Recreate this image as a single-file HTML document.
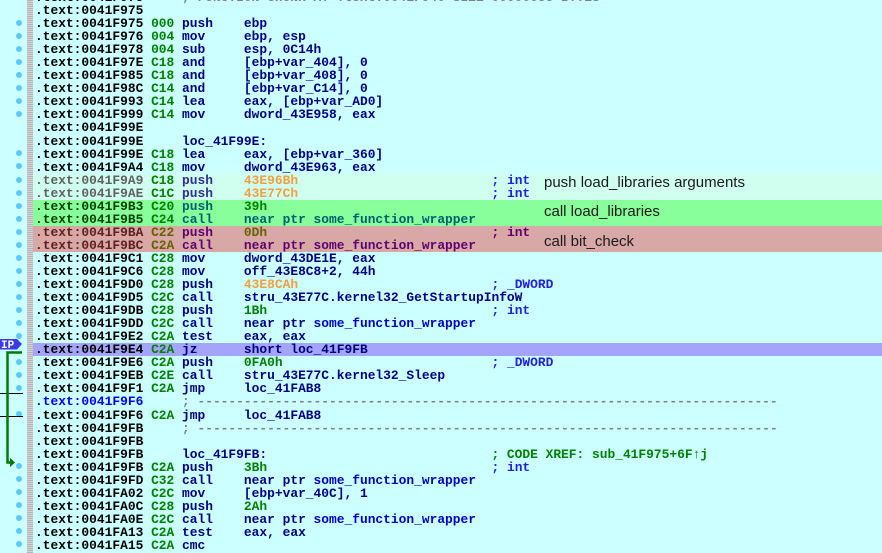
<!DOCTYPE html>
<html><head><meta charset="utf-8"><style>
html,body{margin:0;padding:0;width:882px;height:553px;overflow:hidden;background:#ccffff;}
#g{position:absolute;left:0;top:0;width:27px;height:553px;background:#ccffff;}
#s{position:absolute;left:27px;top:0;width:6px;height:553px;background:repeating-linear-gradient(0deg,#b4b4b4 0 1px,#d4d4d4 1px 2px);}
#code{position:absolute;left:33px;top:-9px;width:849px;font-family:"Liberation Mono",monospace;font-size:12.9px;font-weight:bold;}
.l{height:13.05px;line-height:13.05px;white-space:pre;padding-left:2px;position:relative;color:#000;}
.a{color:#000}.k{color:#008000}.m{color:#000080}.o{color:#000080}.c{color:#2020e0}.n{color:#008000}.f{color:#0000c0}.x{color:#008000}.gr{color:#808080}
.lt{background:#d0fff0}.lt .a{color:#606060}.lt .m{color:#303090}.or{color:#f0a040}
.gn{background:#88ff9a}.gn .a{color:#004000}.gn .m,.gn .o,.gn .f{color:#006070}
.rd{background:#d8a8a6}.rd .a{color:#602020}.rd .k{color:#6a6000}.rd .m,.rd .o,.rd .f,.rd .c{color:#600070}.rd .n{color:#6a6000}
.bl{background:#a4a4fa}
.ann{position:absolute;left:544px;font-family:"Liberation Sans",sans-serif;font-size:15px;color:#1a1a1a;}
.blu{color:#0000ff}
</style></head><body>
<div id="g"></div><div id="s"></div>
<div id="code">
<div class="l"><span class="a">.text:0041F975</span>     <span class="gr">; FUNCTION CHUNK AT .text:0041F940 SIZE 00000035 BYTES</span></div>
<div class="l"><span class="a">.text:0041F975</span></div>
<div class="l"><span class="a">.text:0041F975</span> <span class="k">000</span> <span class="m">push    </span><span class="o">ebp</span></div>
<div class="l"><span class="a">.text:0041F976</span> <span class="k">004</span> <span class="m">mov     </span><span class="o">ebp, esp</span></div>
<div class="l"><span class="a">.text:0041F978</span> <span class="k">004</span> <span class="m">sub     </span><span class="o">esp, 0C14h</span></div>
<div class="l"><span class="a">.text:0041F97E</span> <span class="k">C18</span> <span class="m">and     </span><span class="o">[ebp+var_404], 0</span></div>
<div class="l"><span class="a">.text:0041F985</span> <span class="k">C18</span> <span class="m">and     </span><span class="o">[ebp+var_408], 0</span></div>
<div class="l"><span class="a">.text:0041F98C</span> <span class="k">C14</span> <span class="m">and     </span><span class="o">[ebp+var_C14], 0</span></div>
<div class="l"><span class="a">.text:0041F993</span> <span class="k">C14</span> <span class="m">lea     </span><span class="o">eax, [ebp+var_AD0]</span></div>
<div class="l"><span class="a">.text:0041F999</span> <span class="k">C14</span> <span class="m">mov     </span><span class="o">dword_43E958, eax</span></div>
<div class="l"><span class="a">.text:0041F99E</span></div>
<div class="l"><span class="a">.text:0041F99E</span>     <span class="m">loc_41F99E:</span></div>
<div class="l"><span class="a">.text:0041F99E</span> <span class="k">C18</span> <span class="m">lea     </span><span class="o">eax, [ebp+var_360]</span></div>
<div class="l"><span class="a">.text:0041F9A4</span> <span class="k">C18</span> <span class="m">mov     </span><span class="o">dword_43E963, eax</span></div>
<div class="l lt"><span class="a">.text:0041F9A9</span> <span class="k">C18</span> <span class="m">push    </span><span class="or">43E96Bh</span>                         <span class="c">; int</span></div>
<div class="l lt"><span class="a">.text:0041F9AE</span> <span class="k">C1C</span> <span class="m">push    </span><span class="or">43E77Ch</span>                         <span class="c">; int</span></div>
<div class="l gn"><span class="a">.text:0041F9B3</span> <span class="k">C20</span> <span class="m">push    </span><span class="n">39h</span></div>
<div class="l gn"><span class="a">.text:0041F9B5</span> <span class="k">C24</span> <span class="m">call    </span><span class="o">near ptr <span class="f">some_function_wrapper</span></span></div>
<div class="l rd"><span class="a">.text:0041F9BA</span> <span class="k">C22</span> <span class="m">push    </span><span class="n">0Dh</span>                             <span class="c">; int</span></div>
<div class="l rd"><span class="a">.text:0041F9BC</span> <span class="k">C2A</span> <span class="m">call    </span><span class="o">near ptr <span class="f">some_function_wrapper</span></span></div>
<div class="l"><span class="a">.text:0041F9C1</span> <span class="k">C28</span> <span class="m">mov     </span><span class="o">dword_43DE1E, eax</span></div>
<div class="l"><span class="a">.text:0041F9C6</span> <span class="k">C28</span> <span class="m">mov     </span><span class="o">off_43E8C8+2, 44h</span></div>
<div class="l"><span class="a">.text:0041F9D0</span> <span class="k">C28</span> <span class="m">push    </span><span class="or">43E8CAh</span>                         <span class="c">; _DWORD</span></div>
<div class="l"><span class="a">.text:0041F9D5</span> <span class="k">C2C</span> <span class="m">call    </span><span class="o">stru_43E77C.kernel32_GetStartupInfoW</span></div>
<div class="l"><span class="a">.text:0041F9DB</span> <span class="k">C28</span> <span class="m">push    </span><span class="n">1Bh</span>                             <span class="c">; int</span></div>
<div class="l"><span class="a">.text:0041F9DD</span> <span class="k">C2C</span> <span class="m">call    </span><span class="o">near ptr <span class="f">some_function_wrapper</span></span></div>
<div class="l"><span class="a">.text:0041F9E2</span> <span class="k">C2A</span> <span class="m">test    </span><span class="o">eax, eax</span></div>
<div class="l bl"><span class="a">.text:0041F9E4</span> <span class="k">C2A</span> <span class="m">jz      </span><span class="o">short loc_41F9FB</span></div>
<div class="l"><span class="a">.text:0041F9E6</span> <span class="k">C2A</span> <span class="m">push    </span><span class="n">0FA0h</span>                           <span class="c">; _DWORD</span></div>
<div class="l"><span class="a">.text:0041F9EB</span> <span class="k">C2E</span> <span class="m">call    </span><span class="o">stru_43E77C.kernel32_Sleep</span></div>
<div class="l"><span class="a">.text:0041F9F1</span> <span class="k">C2A</span> <span class="m">jmp     </span><span class="o">loc_41FAB8</span></div>
<div class="l"><span class="blu">.text:0041F9F6</span>     <span class="gr">; ---------------------------------------------------------------------------</span></div>
<div class="l"><span class="a">.text:0041F9F6</span> <span class="k">C2A</span> <span class="m">jmp     </span><span class="o">loc_41FAB8</span></div>
<div class="l"><span class="a">.text:0041F9FB</span>     <span class="gr">; ---------------------------------------------------------------------------</span></div>
<div class="l"><span class="a">.text:0041F9FB</span></div>
<div class="l"><span class="a">.text:0041F9FB</span>     <span class="m">loc_41F9FB:</span>                             <span class="x">; CODE XREF: sub_41F975+6F↑j</span></div>
<div class="l"><span class="a">.text:0041F9FB</span> <span class="k">C2A</span> <span class="m">push    </span><span class="n">3Bh</span>                             <span class="c">; int</span></div>
<div class="l"><span class="a">.text:0041F9FD</span> <span class="k">C32</span> <span class="m">call    </span><span class="o">near ptr <span class="f">some_function_wrapper</span></span></div>
<div class="l"><span class="a">.text:0041FA02</span> <span class="k">C2C</span> <span class="m">mov     </span><span class="o">[ebp+var_40C], 1</span></div>
<div class="l"><span class="a">.text:0041FA0C</span> <span class="k">C28</span> <span class="m">push    </span><span class="n">2Ah</span></div>
<div class="l"><span class="a">.text:0041FA0E</span> <span class="k">C2C</span> <span class="m">call    </span><span class="o">near ptr <span class="f">some_function_wrapper</span></span></div>
<div class="l"><span class="a">.text:0041FA13</span> <span class="k">C2A</span> <span class="m">test    </span><span class="o">eax, eax</span></div>
<div class="l"><span class="a">.text:0041FA15</span> <span class="k">C2A</span> <span class="m">cmc</span></div>
</div>
<div class="ann" style="top:174px">push load_libraries arguments</div>
<div class="ann" style="top:203px">call load_libraries</div>
<div class="ann" style="top:233px">call bit_check</div>
<svg width="33" height="553" style="position:absolute;left:0;top:0">
<g fill="#5cc8ff">
<circle cx="19" cy="23" r="3"/><circle cx="19" cy="36" r="3"/><circle cx="19" cy="49" r="3"/><circle cx="19" cy="62" r="3"/><circle cx="19" cy="75" r="3"/><circle cx="19" cy="88" r="3"/><circle cx="19" cy="101" r="3"/><circle cx="19" cy="114" r="3"/>
<circle cx="19" cy="153" r="3"/><circle cx="19" cy="166" r="3"/><circle cx="19" cy="180" r="3"/><circle cx="19" cy="193" r="3"/><circle cx="19" cy="206" r="3"/><circle cx="19" cy="219" r="3"/><circle cx="19" cy="232" r="3"/><circle cx="19" cy="245" r="3"/><circle cx="19" cy="258" r="3"/><circle cx="19" cy="271" r="3"/><circle cx="19" cy="284" r="3"/><circle cx="19" cy="297" r="3"/><circle cx="19" cy="310" r="3"/><circle cx="19" cy="323" r="3"/><circle cx="19" cy="336" r="3"/>
<circle cx="19" cy="362" r="3"/><circle cx="19" cy="375" r="3"/><circle cx="19" cy="388" r="3"/><circle cx="19" cy="414" r="3"/>
<circle cx="19" cy="466" r="3"/><circle cx="19" cy="479" r="3"/><circle cx="19" cy="492" r="3"/><circle cx="19" cy="505" r="3"/><circle cx="19" cy="518" r="3"/><circle cx="19" cy="531" r="3"/><circle cx="19" cy="544" r="3"/>
</g>
<line x1="0" y1="393.5" x2="23" y2="393.5" stroke="#000" stroke-width="1"/>
<line x1="0" y1="416.5" x2="23" y2="416.5" stroke="#000" stroke-width="1"/>
<path d="M22 352.5 H7.5 V462.5 H10" fill="none" stroke="#007a00" stroke-width="2.5"/>
<path d="M10 458 L15 462.5 L10 467 Z" fill="#007a00"/>
<path d="M0 339 H17 L22 344 L17 349.5 H0 Z" fill="#3a3ae8"/>
<text x="1" y="348" font-family="Liberation Mono,monospace" font-size="11" font-weight="bold" fill="#fff">IP</text>
</svg>
</body></html>
